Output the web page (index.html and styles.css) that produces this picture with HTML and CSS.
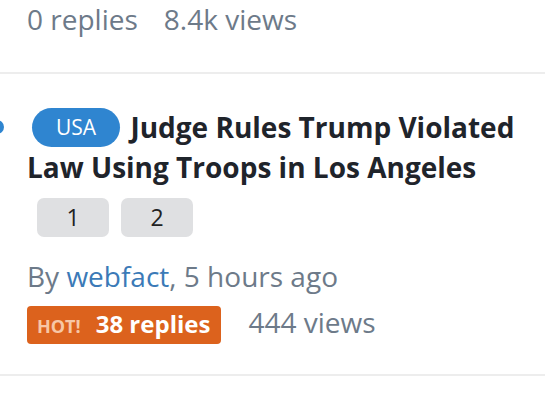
FILE: index.html
```html
<!DOCTYPE html>
<html>
<head>
<meta charset="utf-8">
<link rel="stylesheet" href="styles.css">
</head>
<body>
<div class="row row-top">
  <div class="stats">
    <span class="stat">0 replies</span>
    <span class="stat">8.4k views</span>
  </div>
</div>
<div class="row row-main">
  <span class="unread"></span>
  <h2 class="title"><span class="tag">USA</span> Judge Rules Trump Violated Law Using Troops in Los Angeles</h2>
  <div class="pages">
    <span class="page">1</span>
    <span class="page">2</span>
  </div>
  <div class="byline">By <a class="author">webfact</a>, 5 hours ago</div>
  <div class="stats stats-main">
    <span class="hot"><span class="hot-label">HOT!</span>38 replies</span>
    <span class="stat">444 views</span>
  </div>
</div>
</body>
</html>
```
FILE: styles.css
```css
html, body {
  margin: 0;
  padding: 0;
  background: #fff;
  font-family: "Open Sans", "Noto Sans", sans-serif;
  overflow: hidden;
}
.row {
  position: relative;
  padding: 0 20px 0 27px;
  border-bottom: 2px solid #ededed;
}
.row-top {
  height: 72px;
}
.stats {
  display: flex;
  align-items: baseline;
  gap: 26px;
  font-size: 28px;
  color: #6d7a89;
  line-height: 38px;
}
.row-main {
  padding-top: 33px;
  padding-bottom: 30px;
}
.unread {
  position: absolute;
  left: -10px;
  top: 46px;
  width: 14px;
  height: 14px;
  border-radius: 50%;
  background: #2f85d0;
}
.title {
  margin: 0;
  font-size: 28px;
  font-weight: 700;
  line-height: 40px;
  color: #1f242b;
}
.tag {
  display: inline-block;
  background: #2f85d0;
  color: #fff;
  font-weight: 400;
  font-size: 21px;
  line-height: 39px;
  padding: 0 24px;
  border-radius: 20px;
  margin-left: 5px;
  margin-right: 3px;
  vertical-align: 3px;
}
.pages {
  display: flex;
  gap: 12px;
  margin-top: 11px;
  margin-left: 10px;
}
.page {
  width: 72px;
  height: 39px;
  background: #dfe0e2;
  border-radius: 7px;
  font-size: 23px;
  line-height: 39px;
  text-align: center;
  color: #222;
}
.byline {
  margin-top: 20px;
  font-size: 28px;
  line-height: 38px;
  color: #6d7a89;
}
.author {
  color: #3b7ab7;
}
.stats-main {
  margin-top: 8px;
  gap: 27px;
}
.hot {
  display: inline-block;
  background: #dc621d;
  color: #fff;
  font-weight: 700;
  font-size: 24px;
  line-height: 35px;
  padding: 0 11px 0 10px;
  border-radius: 4px;
}
.hot-label {
  font-size: 18px;
  color: #f7c7a6;
  margin-right: 15px;
}
```
